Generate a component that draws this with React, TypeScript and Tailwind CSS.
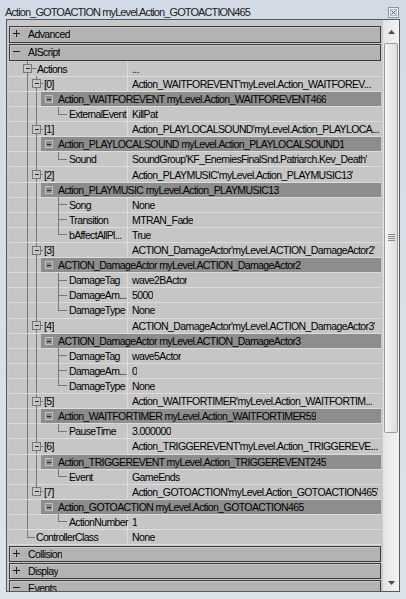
import React from 'react';

const LINE = '#777777';
const RH = 15.12;

type Item = { v: string; h: string; leaves: [string, string][] };

const items: Item[] = [
  { v: "Action_WAITFOREVENT'myLevel.Action_WAITFOREV...", h: 'Action_WAITFOREVENT myLevel.Action_WAITFOREVENT466', leaves: [['ExternalEvent', 'KillPat']] },
  { v: "Action_PLAYLOCALSOUND'myLevel.Action_PLAYLOCA...", h: 'Action_PLAYLOCALSOUND myLevel.Action_PLAYLOCALSOUND1', leaves: [['Sound', "SoundGroup'KF_EnemiesFinalSnd.Patriarch.Kev_Death'"]] },
  { v: "Action_PLAYMUSIC'myLevel.Action_PLAYMUSIC13'", h: 'Action_PLAYMUSIC myLevel.Action_PLAYMUSIC13', leaves: [['Song', 'None'], ['Transition', 'MTRAN_Fade'], ['bAffectAllPl...', 'True']] },
  { v: "ACTION_DamageActor'myLevel.ACTION_DamageActor2'", h: 'ACTION_DamageActor myLevel.ACTION_DamageActor2', leaves: [['DamageTag', 'wave2BActor'], ['DamageAm...', '5000'], ['DamageType', 'None']] },
  { v: "ACTION_DamageActor'myLevel.ACTION_DamageActor3'", h: 'ACTION_DamageActor myLevel.ACTION_DamageActor3', leaves: [['DamageTag', 'wave5Actor'], ['DamageAm...', '0'], ['DamageType', 'None']] },
  { v: "Action_WAITFORTIMER'myLevel.Action_WAITFORTIM...", h: 'Action_WAITFORTIMER myLevel.Action_WAITFORTIMER59', leaves: [['PauseTime', '3.000000']] },
  { v: "Action_TRIGGEREVENT'myLevel.Action_TRIGGEREVE...", h: 'Action_TRIGGEREVENT myLevel.Action_TRIGGEREVENT245', leaves: [['Event', 'GameEnds']] },
  { v: "Action_GOTOACTION'myLevel.Action_GOTOACTION465'", h: 'Action_GOTOACTION myLevel.Action_GOTOACTION465', leaves: [['ActionNumber', '1']] },
];

const L1 = 18.5;
const L2 = 27.5;
const L3 = 49.5;
const CY = 7.5;

function V({ x, y1, y2 }: { x: number; y1: number; y2: number }) {
  return <line x1={x} y1={y1} x2={x} y2={y2} stroke={LINE} strokeWidth={1} />;
}
function H({ x1, x2, y = CY }: { x1: number; x2: number; y?: number }) {
  return <line x1={x1} y1={y} x2={x2} y2={y} stroke={LINE} strokeWidth={1} />;
}
function Box({ cx }: { cx: number }) {
  return (
    <g>
      <rect x={cx - 4} y={CY - 4} width={8} height={8} fill="none" stroke={LINE} strokeWidth={1} />
      <line x1={cx - 2} y1={CY} x2={cx + 2.5} y2={CY} stroke="#2a2a2a" strokeWidth={1} />
    </g>
  );
}

function Gutter({ w, children }: { w: number; children: React.ReactNode }) {
  return (
    <svg width={w} height={RH} className="shrink-0 overflow-visible" shapeRendering="crispEdges">
      {children}
    </svg>
  );
}

const txt = 'text-[10.5px] tracking-[-0.6px] leading-[14px] whitespace-nowrap overflow-hidden text-black';
const nameTxt = 'text-[10.5px] tracking-[-0.65px] leading-[14px] whitespace-nowrap text-black';

function PropRow({ gutter, name, value }: { gutter: React.ReactNode; name?: string; value?: string }) {
  return (
    <div className="flex h-[15.12px] shrink-0 bg-[#c6c6c6] border-b border-[#dcdcdc]">
      <div className="w-[119px] shrink-0 flex items-center border-r border-[#dcdcdc]">
        {gutter}
        <span className={nameTxt}>{name}</span>
      </div>
      <div className="flex-1 min-w-0 flex items-center pl-[4px]">
        <span className={txt}>{value}</span>
      </div>
    </div>
  );
}

function HeaderRow({ n, text }: { n: number; text: string }) {
  return (
    <div className="flex h-[15.12px] shrink-0 bg-[#c6c6c6] border-b border-[#dcdcdc]">
      <Gutter w={32}>
        <V x={L1} y1={0} y2={RH} />
        {n < 7 && <V x={L2} y1={0} y2={RH} />}
      </Gutter>
      <div className="flex-1 min-w-0 flex items-center bg-[#8d8d8d] pl-[4px]">
        <svg width={8} height={8} className="shrink-0" shapeRendering="crispEdges">
          <rect x={0.5} y={0.5} width={7} height={7} fill="none" stroke="#c4c4c4" strokeWidth={1} />
          <line x1={2} y1={4} x2={6} y2={4} stroke="#222" strokeWidth={1} />
        </svg>
        <span className={`${txt} ml-[5px]`}>{text}</span>
      </div>
    </div>
  );
}

function Category({ label, open, h = 17 }: { label: string; open: boolean; h?: number }) {
  return (
    <div
      className={`${h === 17 ? 'h-[17px]' : 'h-[16px]'} shrink-0 mt-[1px] first:mt-0 border border-[#3a3a3a] bg-[#b3b3b3] shadow-[inset_1px_1px_0_#c9c9c9] flex items-center`}
    >
      <svg width={8} height={8} className="ml-[3px] shrink-0" shapeRendering="crispEdges">
        <line x1={0} y1={3.5} x2={7} y2={3.5} stroke="#1e1e1e" strokeWidth={1} />
        {!open && <line x1={3.5} y1={0} x2={3.5} y2={7} stroke="#1e1e1e" strokeWidth={1} />}
      </svg>
      <span className={`${txt} ml-[7px]`}>{label}</span>
    </div>
  );
}

function Scrollbar() {
  return (
    <div className="w-[16px] shrink-0 flex flex-col bg-gradient-to-r from-[#e4e4e4] to-[#f3f3f3] pt-[3px]">
      <div className="h-[17px] shrink-0 flex items-center justify-center">
        <svg width={7} height={4}>
          <polygon points="3.5,0 7,4 0,4" fill="#4a4a4a" />
        </svg>
      </div>
      <div className="mt-[3px] h-[390px] shrink-0 mx-[1px] rounded-[2px] border border-[#9b9b9b] bg-gradient-to-r from-[#f7f7f7] to-[#dcdcdc] flex items-center justify-center">
        <svg width={7} height={8} shapeRendering="crispEdges">
          <line x1={0} y1={0.5} x2={7} y2={0.5} stroke="#8a8a8a" />
          <line x1={0} y1={2.5} x2={7} y2={2.5} stroke="#8a8a8a" />
          <line x1={0} y1={4.5} x2={7} y2={4.5} stroke="#8a8a8a" />
          <line x1={0} y1={6.5} x2={7} y2={6.5} stroke="#8a8a8a" />
        </svg>
      </div>
      <div className="flex-1" />
      <div className="h-[17px] shrink-0 flex items-center justify-center">
        <svg width={7} height={4}>
          <polygon points="0,0 7,0 3.5,4" fill="#4a4a4a" />
        </svg>
      </div>
    </div>
  );
}

export default function App() {
  const rows: React.ReactNode[] = [];
  rows.push(
    <PropRow
      key="actions"
      name="Actions"
      value="..."
      gutter={
        <Gutter w={28}>
          <V x={L1} y1={0} y2={CY - 4} />
          <V x={L1} y1={CY + 4} y2={RH} />
          <Box cx={L1} />
          <H x1={L1 + 4} x2={27} />
        </Gutter>
      }
    />
  );
  items.forEach((it, n) => {
    rows.push(
      <PropRow
        key={`i${n}`}
        name={`[${n}]`}
        value={it.v}
        gutter={
          <Gutter w={35}>
            <V x={L1} y1={0} y2={RH} />
            <V x={L2} y1={0} y2={CY - 4} />
            {n < 7 && <V x={L2} y1={CY + 4} y2={RH} />}
            <Box cx={L2} />
            <H x1={L2 + 4} x2={34} />
          </Gutter>
        }
      />
    );
    rows.push(<HeaderRow key={`h${n}`} n={n} text={it.h} />);
    it.leaves.forEach(([name, value], j) => {
      const last = j === it.leaves.length - 1;
      rows.push(
        <PropRow
          key={`l${n}-${j}`}
          name={name}
          value={value}
          gutter={
            <Gutter w={60}>
              <V x={L1} y1={0} y2={RH} />
              {n < 7 && <V x={L2} y1={0} y2={RH} />}
              <V x={L3} y1={0} y2={last ? CY : RH} />
              <H x1={L3} x2={58} />
            </Gutter>
          }
        />
      );
    });
  });
  rows.push(
    <PropRow
      key="ctrl"
      name="ControllerClass"
      value="None"
      gutter={
        <Gutter w={27}>
          <V x={L1} y1={0} y2={CY} />
          <H x1={L1} x2={26} />
        </Gutter>
      }
    />
  );

  return (
    <div className="w-[406px] h-[599px] overflow-hidden flex flex-col bg-gradient-to-b from-[#d2dbe5] to-[#dde3ea] font-['Liberation_Sans',Arial,sans-serif] text-[#141414]">
      <div className="h-[19px] shrink-0 flex items-center pt-[6px] pl-[5px] pr-[7px]">
        <span className="text-[11px] tracking-[-0.9px] text-[#222] whitespace-nowrap leading-[13px]">
          Action_GOTOACTION myLevel.Action_GOTOACTION465
        </span>
        <div className="ml-auto">
          <svg width={11} height={11} shapeRendering="crispEdges">
            <rect x={0.5} y={0.5} width={10} height={10} fill="#eef2f6" stroke="#8a939e" />
            <rect x={2.5} y={2.5} width={6} height={6} fill="none" stroke="#b3bac2" />
            <line x1={3.5} y1={3.5} x2={7.5} y2={7.5} stroke="#4c5560" shapeRendering="auto" />
            <line x1={7.5} y1={3.5} x2={3.5} y2={7.5} stroke="#4c5560" shapeRendering="auto" />
          </svg>
        </div>
      </div>
      <div className="shrink-0 flex pl-[6px]">
        <div className="w-[394px] h-[573px] border border-[#525960] bg-[#c9c9c9] flex overflow-hidden">
          <div className="flex-1 min-w-0 flex flex-col px-[2px] pt-[5.7px] overflow-hidden">
            <Category label="Advanced" open={false} />
            <Category label="AIScript" open={true} />
            <div className="mt-[1px] flex flex-col shrink-0">{rows}</div>
            <Category label="Collision" open={false} h={16} />
            <Category label="Display" open={false} h={16} />
            <Category label="Events" open={true} h={16} />
          </div>
          <Scrollbar />
        </div>
      </div>
    </div>
  );
}
